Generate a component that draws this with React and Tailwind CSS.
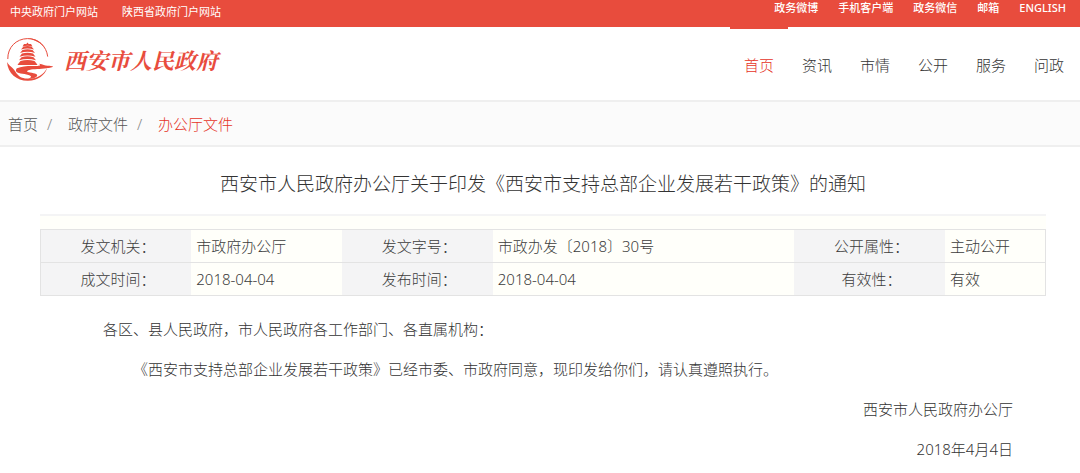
const portalLinks = ["中央政府门户网站", "陕西省政府门户网站"];
const quickLinks = ["政务微博", "手机客户端", "政务微信", "邮箱", "ENGLISH"];
const navItems = ["首页", "资讯", "市情", "公开", "服务", "问政"];

const docInfo = [
  [
    { label: "发文机关：", value: "市政府办公厅" },
    { label: "发文字号：", value: "市政办发〔2018〕30号" },
    { label: "公开属性：", value: "主动公开" },
  ],
  [
    { label: "成文时间：", value: "2018-04-04" },
    { label: "发布时间：", value: "2018-04-04" },
    { label: "有效性：", value: "有效" },
  ],
];

function Logo() {
  return (
    <svg viewBox="0 0 48 46" className="h-[46px] w-12 shrink-0" fill="none" aria-hidden="true">
      {/* brush ring */}
      <path d="M1.8 22C1.500 10.500 10 1.800 21.500 1.600c10.500 0 19 7.400 20.200 18" stroke="#e84c3d" strokeWidth="1" />
      <path d="M21 1c8 0 15 3.800 18.500 11C35.500 6 29 2.800 21 1z" fill="#e84c3d" />
      <path d="M1 25c.8 11.500 10 19 21 18.800C32 43.500 39 38 41.200 31 37.500 37.500 31.500 41.600 23 41.700 17 41.700 14 40 12.500 38.500 9.500 35.500 9 33.500 6.500 31 4 29 2.500 27.500 1 25z" fill="#e84c3d" />
      {/* pagoda */}
      <g fill="#e84c3d">
        <path d="M21.500 5.500l1.200 1.500h2.300l1.500 2.600q-5-1.600-10 0l1.500-2.600h2.300z" />
        <path d="M17.500 9.600q4-1.200 8 0l2.500 3q-6.500-2.200-13 0z" />
        <path d="M16.500 13q5-1.500 10 0l2.500 3.100q-7.500-2.500-15 0z" />
        <path d="M16 16.600q5.500-1.600 11 0l2.500 3.100q-8-2.600-16 0z" />
        <path d="M15.500 20.200q6-1.800 12 0l2.500 3.100q-8.500-2.800-17 0z" />
        <path d="M14.500 23.900q7-2 14 0l2 2.600 1 1.500h-20l1-1.500z" />
      </g>
      {/* river */}
      <path d="M11 31.200c5-2.200 12-2.400 19-2.200 4 .1 5-1 3-2.300 4 .6 6 1.800 8.500 2 2 .2 5 .1 5.500.8.300.8-3.500 1.300-6.500 1.700-6 .8-13 .7-17 1.700-3.500 1-3 2 .5 2.600 5 .9 9 1.500 6.500 4.300-2 1.800-6 2.300-9 2.200 4-1.300 5-3.100 1-4.100-5-1.300-12-1.400-12.500-3.900 0-1.200 0-2.100 1-2.800z" fill="#e84c3d" />
    </svg>
  );
}

function TopBar() {
  return (
    <div className="flex h-[27px] items-start justify-between bg-[#e84c3d] px-[10px] text-[11px] leading-4 text-white">
      <div className="flex gap-6 pt-1 font-normal">
        {portalLinks.map((link) => (
          <a key={link} href="#">{link}</a>
        ))}
      </div>
      <div className="flex gap-5 pr-1 font-medium">
        {quickLinks.map((link) => (
          <a key={link} href="#">{link}</a>
        ))}
      </div>
    </div>
  );
}

function Header() {
  return (
    <header className="flex h-[75px] items-start justify-between border-b-2 border-[#efefef] bg-white pr-0.5 pl-[6px]">
      <a href="#" className="flex items-center gap-[10px] pt-[10px] text-[22px] leading-7 font-bold text-[#e84c3d] italic">
        <Logo />
        <span className="font-['Noto_Serif_CJK_SC','Noto_Sans_CJK_SC',serif]">西安市人民政府</span>
      </a>
      <nav className="flex text-[15px] text-[#333]">
        {navItems.map((item, i) => (
          <a
            key={item}
            href="#"
            className={
              i === 0
                ? "border-t-2 border-[#e84c3d] px-[14px] pt-[24px] leading-6 text-[#e5331f]"
                : "border-t-2 border-transparent px-[14px] pt-[24px] leading-6"
            }
          >
            {item}
          </a>
        ))}
      </nav>
    </header>
  );
}

function Breadcrumb() {
  return (
    <nav className="flex h-[45px] items-center border-b-2 border-[#efefef] bg-[#fbfbfb] px-2 pt-0.5 text-[15px] text-[#555]">
      <a href="#">首页</a>
      <span className="w-[30px] pl-[9px] text-[#888]">/</span>
      <a href="#">政府文件</a>
      <span className="w-[30px] pl-[9px] text-[#888]">/</span>
      <a href="#" className="text-[#e5331f]">办公厅文件</a>
    </nav>
  );
}

function DocTable() {
  return (
    <table className="w-full table-fixed border-collapse border border-[#e3e3e3] bg-[#fffffa] text-[15px] text-[#3c3c3c]">
      <colgroup>
        <col className="w-[15%]" />
        <col className="w-[15%]" />
        <col className="w-[15%]" />
        <col className="w-[30%]" />
        <col className="w-[15%]" />
        <col className="w-[10%]" />
      </colgroup>
      <tbody>
        {docInfo.map((row, i) => (
          <tr key={i} className="h-[33px] border-b border-[#e3e3e3]">
            {row.map(({ label, value }) => [
              <th key={label} scope="row" className="bg-[#f4f4f5] pl-1 text-center font-light">{label}</th>,
              <td key={label + value} className="pl-[5px]">{value}</td>,
            ])}
          </tr>
        ))}
      </tbody>
    </table>
  );
}

export default function App() {
  return (
    <div className="bg-white font-['Noto_Sans','Noto_Sans_CJK_SC',sans-serif] font-light" lang="zh-CN">
      <TopBar />
      <Header />
      <Breadcrumb />
      <main className="pr-[34px] pl-10">
        <h1 className="flex h-[69px] items-center justify-center border-b-2 border-[#f4f4f5] pt-2 text-[19px] font-light text-[#333]">
          西安市人民政府办公厅关于印发《西安市支持总部企业发展若干政策》的通知
        </h1>
        <div className="bg-[#fffffa] pt-[13px]">
          <DocTable />
        </div>
        <article className="pt-[13px] pr-[33px] pl-[63px] text-[15px] leading-10 text-[#333]">
          <p>各区、县人民政府，市人民政府各工作部门、各直属机构：</p>
          <p className="indent-[30px]">《西安市支持总部企业发展若干政策》已经市委、市政府同意，现印发给你们，请认真遵照执行。</p>
          <p className="text-right">西安市人民政府办公厅</p>
          <p className="text-right">2018年4月4日</p>
        </article>
      </main>
    </div>
  );
}
